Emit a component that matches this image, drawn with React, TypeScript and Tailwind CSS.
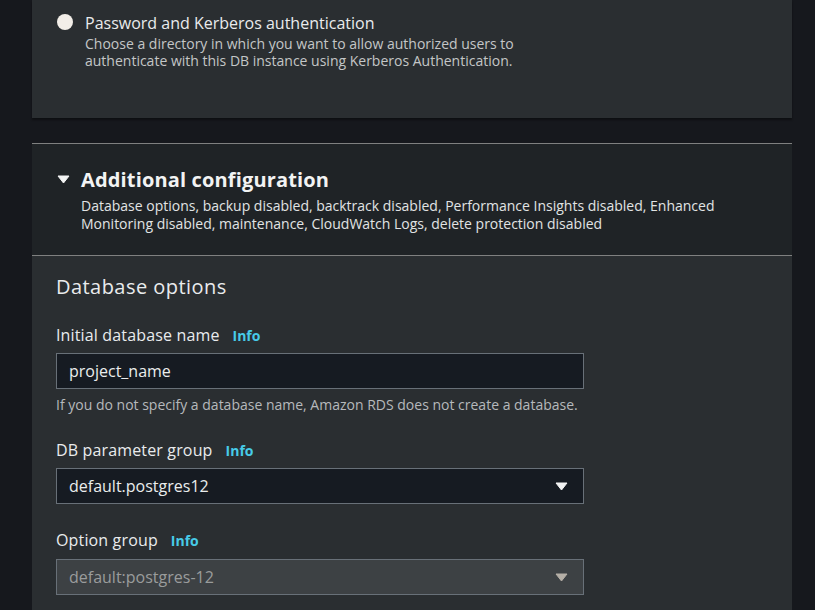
const font = { fontFamily: '"Open Sans", "Noto Sans", sans-serif' };

function Caret({ color }: { color: string }) {
  return (
    <svg width="13" height="9" viewBox="0 0 13 9" aria-hidden>
      <path d="M1 1h11L6.5 8z" fill={color} stroke={color} strokeWidth="1" strokeLinejoin="round" />
    </svg>
  );
}

function Label({ text }: { text: string }) {
  return (
    <div className="flex h-[22px] items-center gap-[13px]">
      <span className="text-[16px] tracking-[0.15px] text-[#e9ebed]">{text}</span>
      <span className="text-[14px] font-bold text-[#47cbe8]">Info</span>
    </div>
  );
}

export default function App() {
  return (
    <div className="min-h-[610px] w-[815px] overflow-hidden bg-[#16181d] pl-[32px] pr-[23px]" style={font}>
      <div className="flex h-[118px] gap-[12px] bg-[#2a2e31] pl-[25px] pt-[12px] shadow-[0_2px_2px_rgba(0,0,0,0.4)]">
        <div className="mt-[2px] h-[16px] w-[16px] shrink-0 rounded-full bg-[#f2eee8]" />
        <div>
          <div className="text-[16px] leading-[22px] text-[#e9ebed]">Password and Kerberos authentication</div>
          <div className="mt-[1px] w-[460px] text-[14px] leading-[17px] text-[#c4c6c7]">
            Choose a directory in which you want to allow authorized users to authenticate with this DB instance using
            Kerberos Authentication.
          </div>
        </div>
      </div>

      <div className="mt-[25px] border-t border-[#7f8080] bg-[#1f2326]">
        <div className="flex gap-[11px] pb-[22px] pl-[25px] pt-[24px]">
          <div className="mt-[7px] shrink-0">
            <Caret color="#f2f3f3" />
          </div>
          <div>
            <div className="text-[20px] font-bold leading-[24px] tracking-[0.15px] text-[#f2f3f3]">
              Additional configuration
            </div>
            <div className="mt-[5px] w-[680px] text-[14px] leading-[18px] text-[#e1e3e4]">
              Database options, backup disabled, backtrack disabled, Performance Insights disabled, Enhanced Monitoring
              disabled, maintenance, CloudWatch Logs, delete protection disabled
            </div>
          </div>
        </div>
      </div>

      <div className="border-t border-[#7f8080] bg-[#2a2e31] px-[24px] pb-[20px] pt-[19px]">
        <div className="text-[20px] leading-[24px] tracking-[0.45px] text-[#e9ebed]">Database options</div>

        <div className="mt-[25px]">
          <Label text="Initial database name" />
          <div className="mt-[7px] flex h-[36px] w-[528px] items-center border border-[#687078] bg-[#161b22] px-[12px] text-[16px] text-[#eaeded]">
            project_name
          </div>
          <div className="mt-[6px] text-[14px] leading-[20px] text-[#b6b9bc]">
            If you do not specify a database name, Amazon RDS does not create a database.
          </div>
        </div>

        <div className="mt-[24px]">
          <Label text="DB parameter group" />
          <div className="mt-[7px] flex h-[36px] w-[528px] items-center justify-between border border-[#687078] bg-[#161b22] pl-[12px] pr-[15px] text-[16px] text-[#eaeded]">
            <span>default.postgres12</span>
            <Caret color="#f2f3f3" />
          </div>
        </div>

        <div className="mt-[25px]">
          <Label text="Option group" />
          <div className="mt-[8px] flex h-[36px] w-[528px] items-center justify-between border border-[#687078] bg-[#3d4144] pl-[12px] pr-[15px] text-[16px] text-[#9a9c9c]">
            <span>default:postgres-12</span>
            <Caret color="#b5afa7" />
          </div>
        </div>
      </div>
    </div>
  );
}
